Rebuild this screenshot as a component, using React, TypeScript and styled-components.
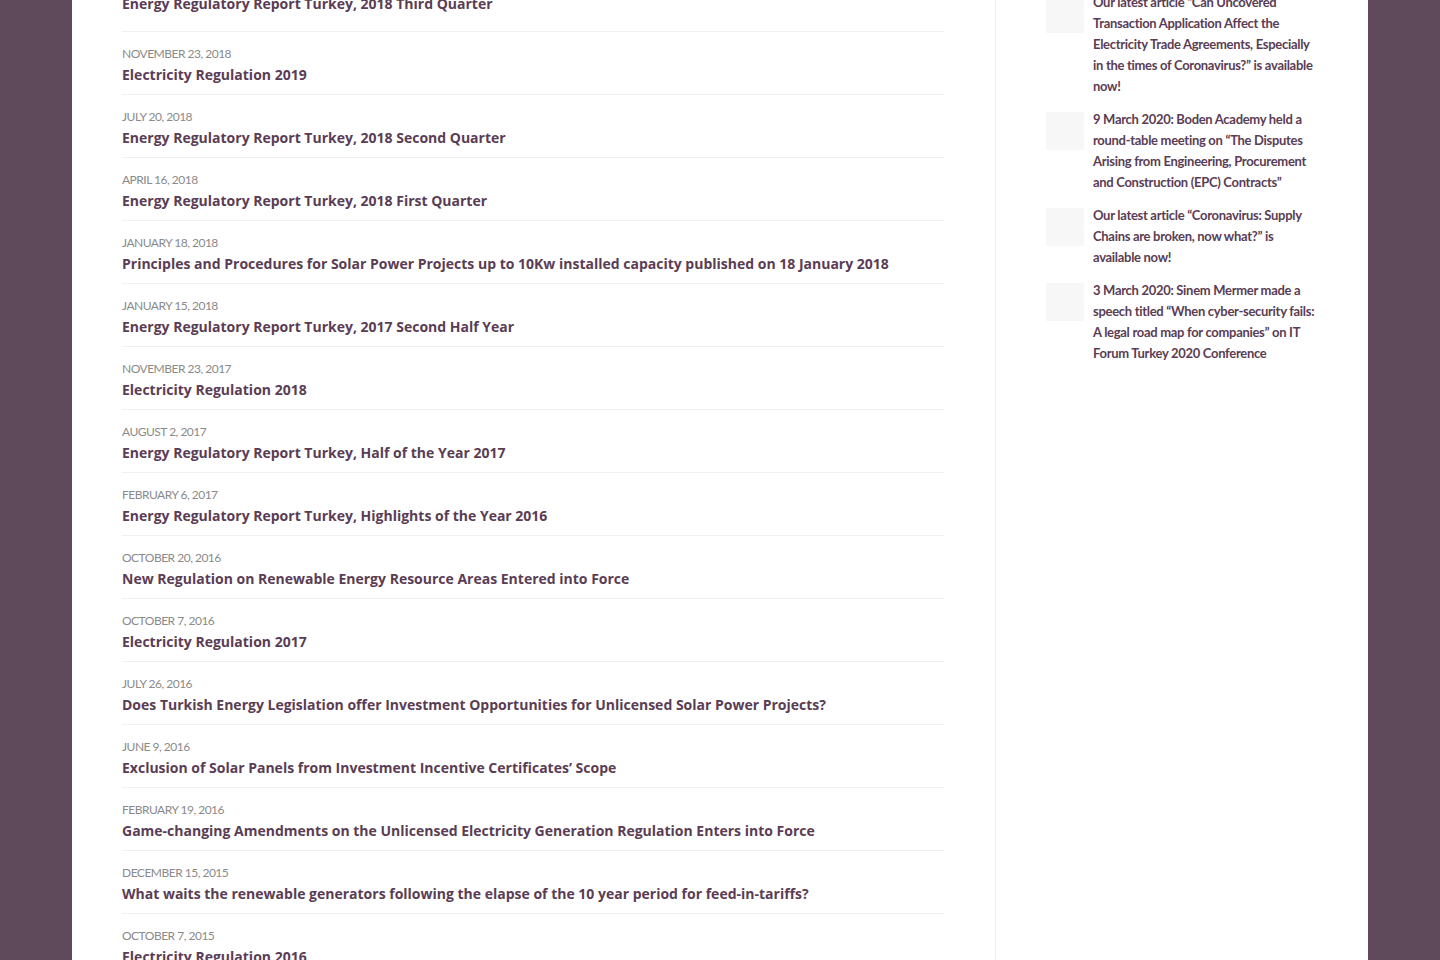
import React from "react";
import styled, { createGlobalStyle } from "styled-components";

const Global = createGlobalStyle`
  html, body { margin: 0; padding: 0; background: #5f4a5c; height: 100%; overflow: hidden; }
  * { box-sizing: border-box; }
`;

const Page = styled.div`
  width: 1296px;
  margin: 0 auto;
  height: 960px;
  overflow: hidden;
  background: #fff;
  display: grid;
  grid-template-columns: 924px 372px;
`;

const Main = styled.main`
  padding: 0 51px 0 50px;
  border-right: 1px solid #efefef;
`;

const List = styled.div`
  margin-top: -39px;
  display: flex;
  flex-direction: column;
`;

const Item = styled.article<{ $extra?: number }>`
  padding: 13px 0 ${(p) => 7 + (p.$extra || 0)}px;
  border-bottom: 1px solid #f0f0f0;
`;

const DateLine = styled.div`
  font-family: "Lato", "Liberation Sans", sans-serif;
  font-size: 12px;
  line-height: 18px;
  color: #8a8a8a;
  text-transform: uppercase;
  letter-spacing: -0.5px;
`;

const Title = styled.a`
  display: block;
  font-family: "Open Sans", "Liberation Sans", sans-serif;
  font-weight: 700;
  font-size: 14px;
  line-height: 24px;
  color: #5a3d54;
  text-decoration: none;
`;

const Side = styled.aside`
  padding: 0 50px 0 50px;
`;

const SideList = styled.div`
  margin-top: -8px;
  display: flex;
  flex-direction: column;
  gap: 12px;
`;

const SideItem = styled.div`
  display: flex;
  gap: 9px;
  align-items: flex-start;
`;

const Thumb = styled.div`
  flex: 0 0 38px;
  width: 38px;
  height: 38px;
  margin-top: 3px;
  background: #f7f7f7;
`;

const SideText = styled.a`
  flex: 1;
  font-family: "Lato", "Liberation Sans", sans-serif;
  font-weight: 700;
  font-size: 13px;
  line-height: 21px;
  color: #5a3d54;
  text-decoration: none;
  letter-spacing: -0.3px;
`;

const posts = [
  ["", "Energy Regulatory Report Turkey, 2018 Third Quarter"],
  ["November 23, 2018", "Electricity Regulation 2019"],
  ["July 20, 2018", "Energy Regulatory Report Turkey, 2018 Second Quarter"],
  ["April 16, 2018", "Energy Regulatory Report Turkey, 2018 First Quarter"],
  ["January 18, 2018", "Principles and Procedures for Solar Power Projects up to 10Kw installed capacity published on 18 January 2018"],
  ["January 15, 2018", "Energy Regulatory Report Turkey, 2017 Second Half Year"],
  ["November 23, 2017", "Electricity Regulation 2018"],
  ["August 2, 2017", "Energy Regulatory Report Turkey, Half of the Year 2017"],
  ["February 6, 2017", "Energy Regulatory Report Turkey, Highlights of the Year 2016"],
  ["October 20, 2016", "New Regulation on Renewable Energy Resource Areas Entered into Force"],
  ["October 7, 2016", "Electricity Regulation 2017"],
  ["July 26, 2016", "Does Turkish Energy Legislation offer Investment Opportunities for Unlicensed Solar Power Projects?"],
  ["June 9, 2016", "Exclusion of Solar Panels from Investment Incentive Certificates’ Scope"],
  ["February 19, 2016", "Game-changing Amendments on the Unlicensed Electricity Generation Regulation Enters into Force"],
  ["December 15, 2015", "What waits the renewable generators following the elapse of the 10 year period for feed-in-tariffs?"],
  ["October 7, 2015", "Electricity Regulation 2016"],
];

const news = [
  "Our latest article “Can Uncovered Transaction Application Affect the Electricity Trade Agreements, Especially in the times of Coronavirus?” is available now!",
  "9 March 2020: Boden Academy held a round-table meeting on “The Disputes Arising from Engineering, Procurement and Construction (EPC) Contracts”",
  "Our latest article “Coronavirus: Supply Chains are broken, now what?” is available now!",
  "3 March 2020: Sinem Mermer made a speech titled “When cyber-security fails: A legal road map for companies” on IT Forum Turkey 2020 Conference",
];

export default function App() {
  return (
    <>
      <Global />
      <Page>
        <Main>
          <List>
            {posts.map(([d, t], i) => (
              <Item key={i} $extra={i === 0 ? 8 : 0}>
                <DateLine>{d || "\u00a0"}</DateLine>
                <Title href="#">{t}</Title>
              </Item>
            ))}
          </List>
        </Main>
        <Side>
          <SideList>
            {news.map((n, i) => (
              <SideItem key={i}>
                <Thumb />
                <SideText href="#">{n}</SideText>
              </SideItem>
            ))}
          </SideList>
        </Side>
      </Page>
    </>
  );
}
